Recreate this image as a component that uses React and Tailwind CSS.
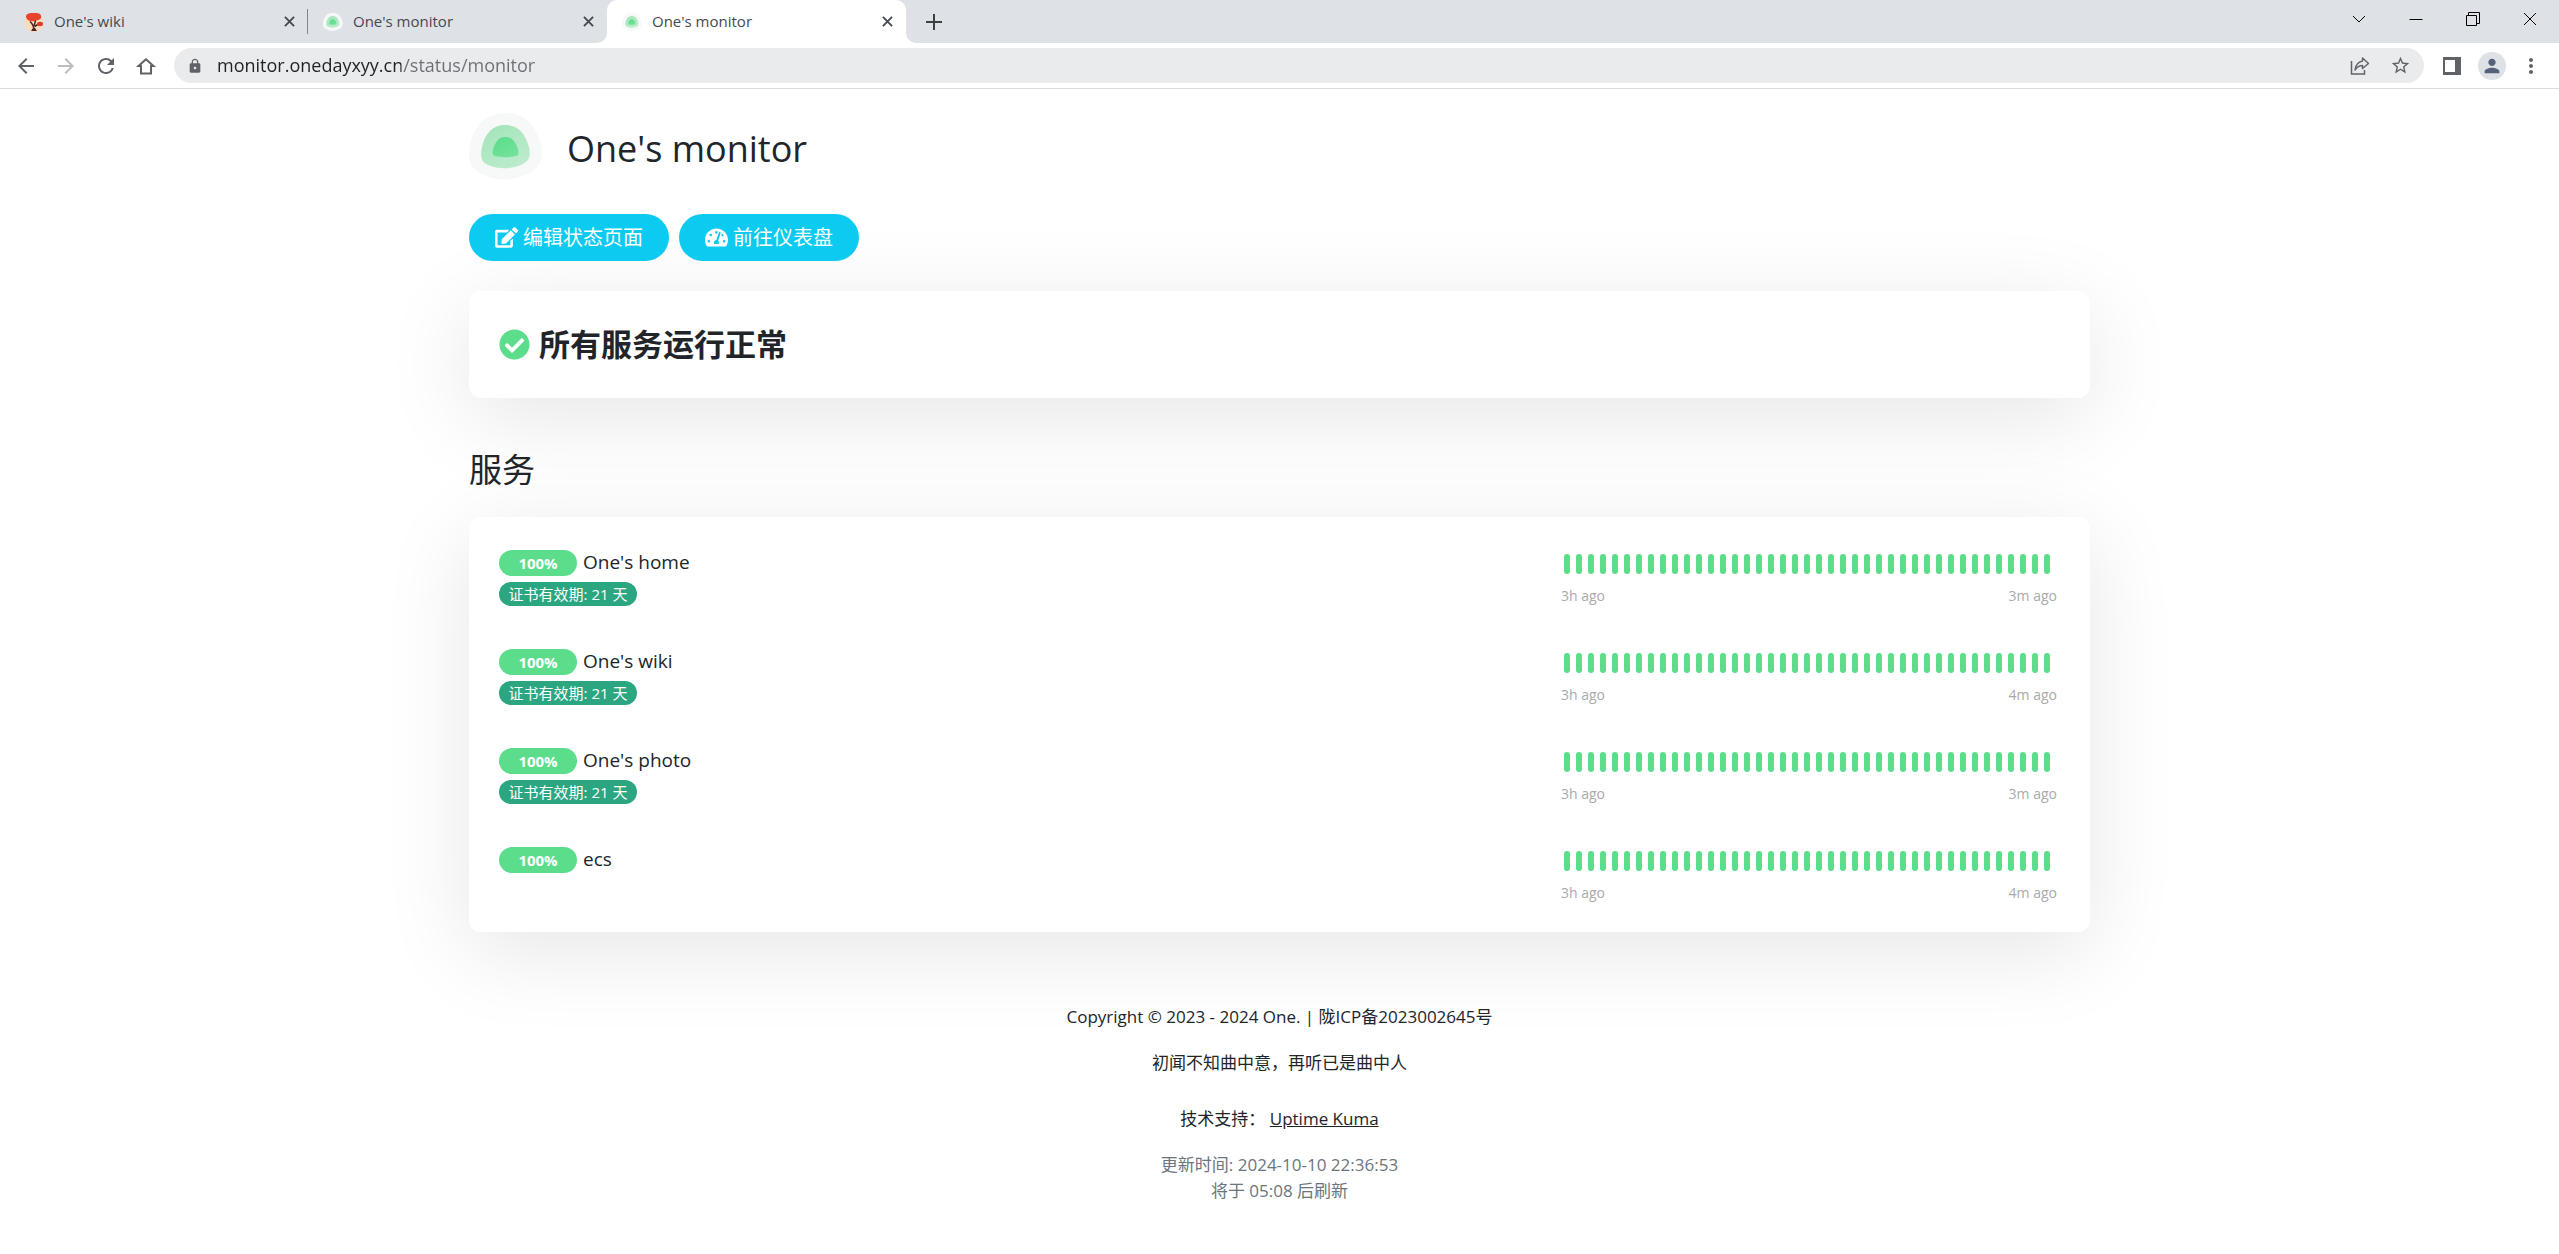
import { useState } from 'react';
import { FaCheckCircle, FaEdit, FaTachometerAlt } from 'react-icons/fa';
import { MdArrowBack, MdArrowForward, MdLock, MdMoreVert, MdPerson, MdRefresh, MdStarBorder } from 'react-icons/md';

const tabs = [
  { title: "One's wiki", icon: 'wiki' },
  { title: "One's monitor", icon: 'kuma' },
  { title: "One's monitor", icon: 'kuma', active: true },
];

const monitors = [
  { name: "One's home", uptime: '100%', cert: '证书有效期: 21 天', from: '3h ago', to: '3m ago' },
  { name: "One's wiki", uptime: '100%', cert: '证书有效期: 21 天', from: '3h ago', to: '4m ago' },
  { name: "One's photo", uptime: '100%', cert: '证书有效期: 21 天', from: '3h ago', to: '3m ago' },
  { name: 'ecs', uptime: '100%', from: '3h ago', to: '4m ago' },
];

const beats = Array.from({ length: 41 }, (_, i) => i);

function KumaLogo({ className }) {
  return (
    <svg viewBox="0 0 74 68" className={className} aria-hidden="true">
      <defs>
        <linearGradient id="ring" x1="0.2" y1="0" x2="0.8" y2="1">
          <stop offset="0" stopColor="#a4e5b9" />
          <stop offset="1" stopColor="#bdecce" />
        </linearGradient>
        <linearGradient id="core" x1="0.2" y1="0" x2="0.8" y2="1">
          <stop offset="0" stopColor="#5cdd8b" />
          <stop offset="1" stopColor="#74e29b" />
        </linearGradient>
      </defs>
      <path
        d="M37 0C57 0 67 13 72 32C75 45 71 55 60 60C46 68 28 69 13 61C1 55 -2 47 1 32C5 12 18 0 37 0Z"
        fill="#f7f8f8"
      />
      <path
        d="M36 12C49 12 56 20 60 34C62 43 60 48 54 51C44 56 30 57 19 52C12 49 11 43 13 34C16 20 24 12 36 12Z"
        fill="url(#ring)"
      />
      <path
        d="M36 24C43 24 46 28 49 36C50 41 50 42 47 43C41 44.500 32 44.500 26 43C23 42 23.500 40 24 36C27 28 30 24 36 24Z"
        fill="url(#core)"
      />
    </svg>
  );
}

function WikiLogo({ className }) {
  return (
    <svg viewBox="0 0 20 20" className={className} aria-hidden="true">
      <circle cx="10" cy="10.5" r="9.5" fill="#fbdcb8" />
      <path d="M10 19C10 15 9 12 6 9.500M10 14C11 11 12 8 11.500 5M10.500 14.500L15.500 11.500" fill="none" stroke="#4a2420" strokeWidth="1.600" />
      <path d="M7 19h6l-2-3H9z" fill="#4a2420" />
      <path d="M2 5C2 2 4 1 9 1C15 0.500 18 2 17 6C15 9 12 8 10 9C8 10 3 9 2 5Z" fill="#e8432c" />
      <ellipse cx="16" cy="12" rx="3" ry="2.200" fill="#dd3b28" />
    </svg>
  );
}

function CloseMark({ className }) {
  return (
    <svg viewBox="0 0 12 12" className={className} fill="none" stroke="currentColor" strokeWidth="2" aria-hidden="true">
      <path d="M1 1l10 10M11 1L1 11" />
    </svg>
  );
}

function Tab({ tab, divider }) {
  const Icon = tab.icon === 'wiki' ? WikiLogo : KumaLogo;
  return (
    <div
      className={
        tab.active
          ? 'relative flex h-[43px] w-[299px] items-center rounded-t-[10px] bg-white pl-[15px] pr-[11px]'
          : 'relative flex h-[43px] w-[299px] items-center pl-[15px] pr-[11px]'
      }
    >
      {tab.active && (
        <>
          <span className="absolute bottom-0 -left-[10px] size-[10px] bg-white">
            <span className="block size-full rounded-br-[10px] bg-[#dee1e6]" />
          </span>
          <span className="absolute bottom-0 -right-[10px] size-[10px] bg-white">
            <span className="block size-full rounded-bl-[10px] bg-[#dee1e6]" />
          </span>
        </>
      )}
      <Icon className="size-5 shrink-0" />
      <span className="ml-[10px] flex-1 truncate text-[15px]">{tab.title}</span>
      <button type="button" aria-label="Close tab" className="p-[2px]">
        <CloseMark className="size-[11px]" />
      </button>
      {divider && <span className="absolute right-0 top-[9px] h-[25px] w-px bg-[#80868b]" />}
    </div>
  );
}

function BrowserBar() {
  const [url, setUrl] = useState('monitor.onedayxyy.cn/status/monitor');

  return (
    <header className="border-b border-[#d9dbde] text-[#45494d]">
      <div className="flex h-[43px] items-center bg-[#dee1e6] pl-[9px] pr-px">
        {tabs.map((tab, i) => (
          <Tab key={i} tab={tab} divider={i === 0} />
        ))}
        <button type="button" aria-label="New tab" className="ml-5">
          <svg viewBox="0 0 16 16" className="size-4" stroke="#3c4043" strokeWidth="2">
            <path d="M8 0v16M0 8h16" />
          </svg>
        </button>
        <div className="mb-[6px] ml-auto flex text-black">
          <button type="button" aria-label="Search tabs" className="flex w-[57px] justify-center">
            <svg viewBox="0 0 14 14" className="size-[14px]" fill="none" stroke="currentColor">
              <path d="M1 4l6 6 6-6" />
            </svg>
          </button>
          <button type="button" aria-label="Minimize" className="flex w-[57px] justify-center">
            <svg viewBox="0 0 14 14" className="size-[14px]" fill="none" stroke="currentColor">
              <path d="M0.500 7.500h13" />
            </svg>
          </button>
          <button type="button" aria-label="Restore" className="flex w-[57px] justify-center">
            <svg viewBox="0 0 14 14" className="size-[14px]" fill="none" stroke="currentColor">
              <path d="M0.500 3.500h10v10h-10zM2.500 3.500v-3h11v11h-3" />
            </svg>
          </button>
          <button type="button" aria-label="Close" className="flex w-[57px] justify-center">
            <svg viewBox="0 0 14 14" className="size-[14px]" fill="none" stroke="currentColor">
              <path d="M1 1l12 12M13 1L1 13" />
            </svg>
          </button>
        </div>
      </div>

      <div className="flex h-[45px] items-center pl-[14px] pr-4 text-[#5f6368]">
        <div className="flex gap-4">
          <button type="button" aria-label="Back">
            <MdArrowBack size={24} />
          </button>
          <button type="button" aria-label="Forward" className="text-[#bbbdc0]">
            <MdArrowForward size={24} />
          </button>
          <button type="button" aria-label="Reload">
            <MdRefresh size={24} />
          </button>
          <button type="button" aria-label="Home">
            <svg viewBox="0 0 24 24" className="size-6" fill="none" stroke="currentColor" strokeWidth="2">
              <path d="M12 5.300L4.500 12H7v7.500h10V12h2.500z" />
            </svg>
          </button>
        </div>
        <div className="ml-4 flex h-[35px] flex-1 items-center rounded-full bg-[#e9ebed] px-[13px]">
          <MdLock size={16} />
          <input
            aria-label="Address"
            value={url}
            onChange={(e) => setUrl(e.target.value)}
            className="ml-[14px] flex-1 bg-linear-to-r from-[#202124] from-[184px] to-[#6b6f74] to-[184px] bg-clip-text text-[18px] text-transparent caret-[#202124] outline-none"
          />
          <div className="flex gap-5">
            <button type="button" aria-label="Share">
              <svg viewBox="0 0 20 20" className="size-5" fill="none" stroke="currentColor" strokeWidth="1.500">
                <path d="M1.500 5v13h13v-4" />
                <path d="M12.500 2l6 5.500-6 5V9.500C9 9.500 7 11 5 14C5.500 9 8 6 12.500 5z" strokeLinejoin="round" />
              </svg>
            </button>
            <button type="button" aria-label="Bookmark this tab">
              <MdStarBorder size={21} />
            </button>
          </div>
        </div>
        <div className="ml-[19px] flex items-center">
          <button type="button" aria-label="Side panel">
            <svg viewBox="0 0 18 18" className="size-[18px]">
              <path d="M0 0h18v18H0zM2 3v12h10V3z" fill="currentColor" fillRule="evenodd" />
            </svg>
          </button>
          <button type="button" aria-label="Profile" className="ml-[17px] mr-[13px] rounded-full bg-[#dee1e6] p-[3px] text-[#56617a]">
            <MdPerson size={22} />
          </button>
          <button type="button" aria-label="Menu">
            <MdMoreVert size={24} />
          </button>
        </div>
      </div>
    </header>
  );
}

function MonitorRow({ monitor }) {
  return (
    <li className="flex h-[99px] justify-between">
      <div className="pt-[23px]">
        <div className="flex items-start gap-[6px]">
          <span className="w-[78px] rounded-full bg-[#5cdd8b] text-center text-[15px] leading-[26px] font-bold text-white">
            {monitor.uptime}
          </span>
          <span className="text-[19px] leading-[24px]">{monitor.name}</span>
        </div>
        {monitor.cert && (
          <span className="mt-[6px] block w-[138px] rounded-full bg-[#2ca681] text-center text-[15px] leading-[24px] whitespace-nowrap text-white">
            {monitor.cert}
          </span>
        )}
      </div>
      <div className="w-[499px] pt-[27px]">
        <div className="flex gap-[6px] pl-[3px]">
          {beats.map((beat) => (
            <span key={beat} className="h-[20px] w-[6px] rounded-full bg-[#5cdd8b]" />
          ))}
        </div>
        <div className="flex justify-between pr-[3px] pt-[12px] text-[14px] leading-[20px] text-[#aaa]">
          <span>{monitor.from}</span>
          <span>{monitor.to}</span>
        </div>
      </div>
    </li>
  );
}

export default function App() {
  return (
    <div className="min-h-screen bg-white font-['Open_Sans','Noto_Sans_CJK_SC',sans-serif] text-[#212529]">
      <BrowserBar />

      <main className="mx-auto w-full max-w-[1621px] pt-6 pb-12">
        <div className="flex items-end gap-6">
          <KumaLogo className="h-[68px] w-[74px]" />
          <h1 className="text-[36px] leading-[64px] font-medium">One's monitor</h1>
        </div>

        <div className="mt-[33px] flex gap-[10px]">
          <button type="button" className="flex h-[47px] items-center gap-[5px] rounded-full bg-[#0dcaf0] px-[26px] text-[20px] text-white">
            <FaEdit size={23} />
            编辑状态页面
          </button>
          <button type="button" className="flex h-[47px] items-center gap-[5px] rounded-full bg-[#0dcaf0] px-[26px] text-[20px] text-white">
            <FaTachometerAlt size={23} />
            前往仪表盘
          </button>
        </div>

        <section className="mt-[30px] flex h-[107px] items-center gap-[9px] rounded-xl bg-white px-[30px] shadow-[0_19px_88px_rgba(0,0,0,0.1)]">
          <FaCheckCircle size={31} className="text-[#5cdd8b]" />
          <span className="text-[31px] font-bold">所有服务运行正常</span>
        </section>

        <h2 className="mt-[52px] mb-[27px] text-[33px] leading-[40px]">服务</h2>

        <ul className="rounded-xl bg-white px-[30px] pt-[10px] pb-[9px] shadow-[0_19px_88px_rgba(0,0,0,0.1)]">
          {monitors.map((monitor) => (
            <MonitorRow key={monitor.name} monitor={monitor} />
          ))}
        </ul>

        <footer className="mt-[72px] text-center text-[17px] leading-[26px]">
          <p>Copyright © 2023 - 2024 One. | 陇ICP备2023002645号</p>
          <p className="mt-5">初闻不知曲中意，再听已是曲中人</p>
          <p className="mt-[30px]">
            技术支持：{' '}
            <a href="https://github.com/louislam/uptime-kuma" className="underline">
              Uptime Kuma
            </a>
          </p>
          <div className="mt-5 text-[#6c757d]">
            <p>更新时间: 2024-10-10 22:36:53</p>
            <p>将于 05:08 后刷新</p>
          </div>
        </footer>
      </main>
    </div>
  );
}
